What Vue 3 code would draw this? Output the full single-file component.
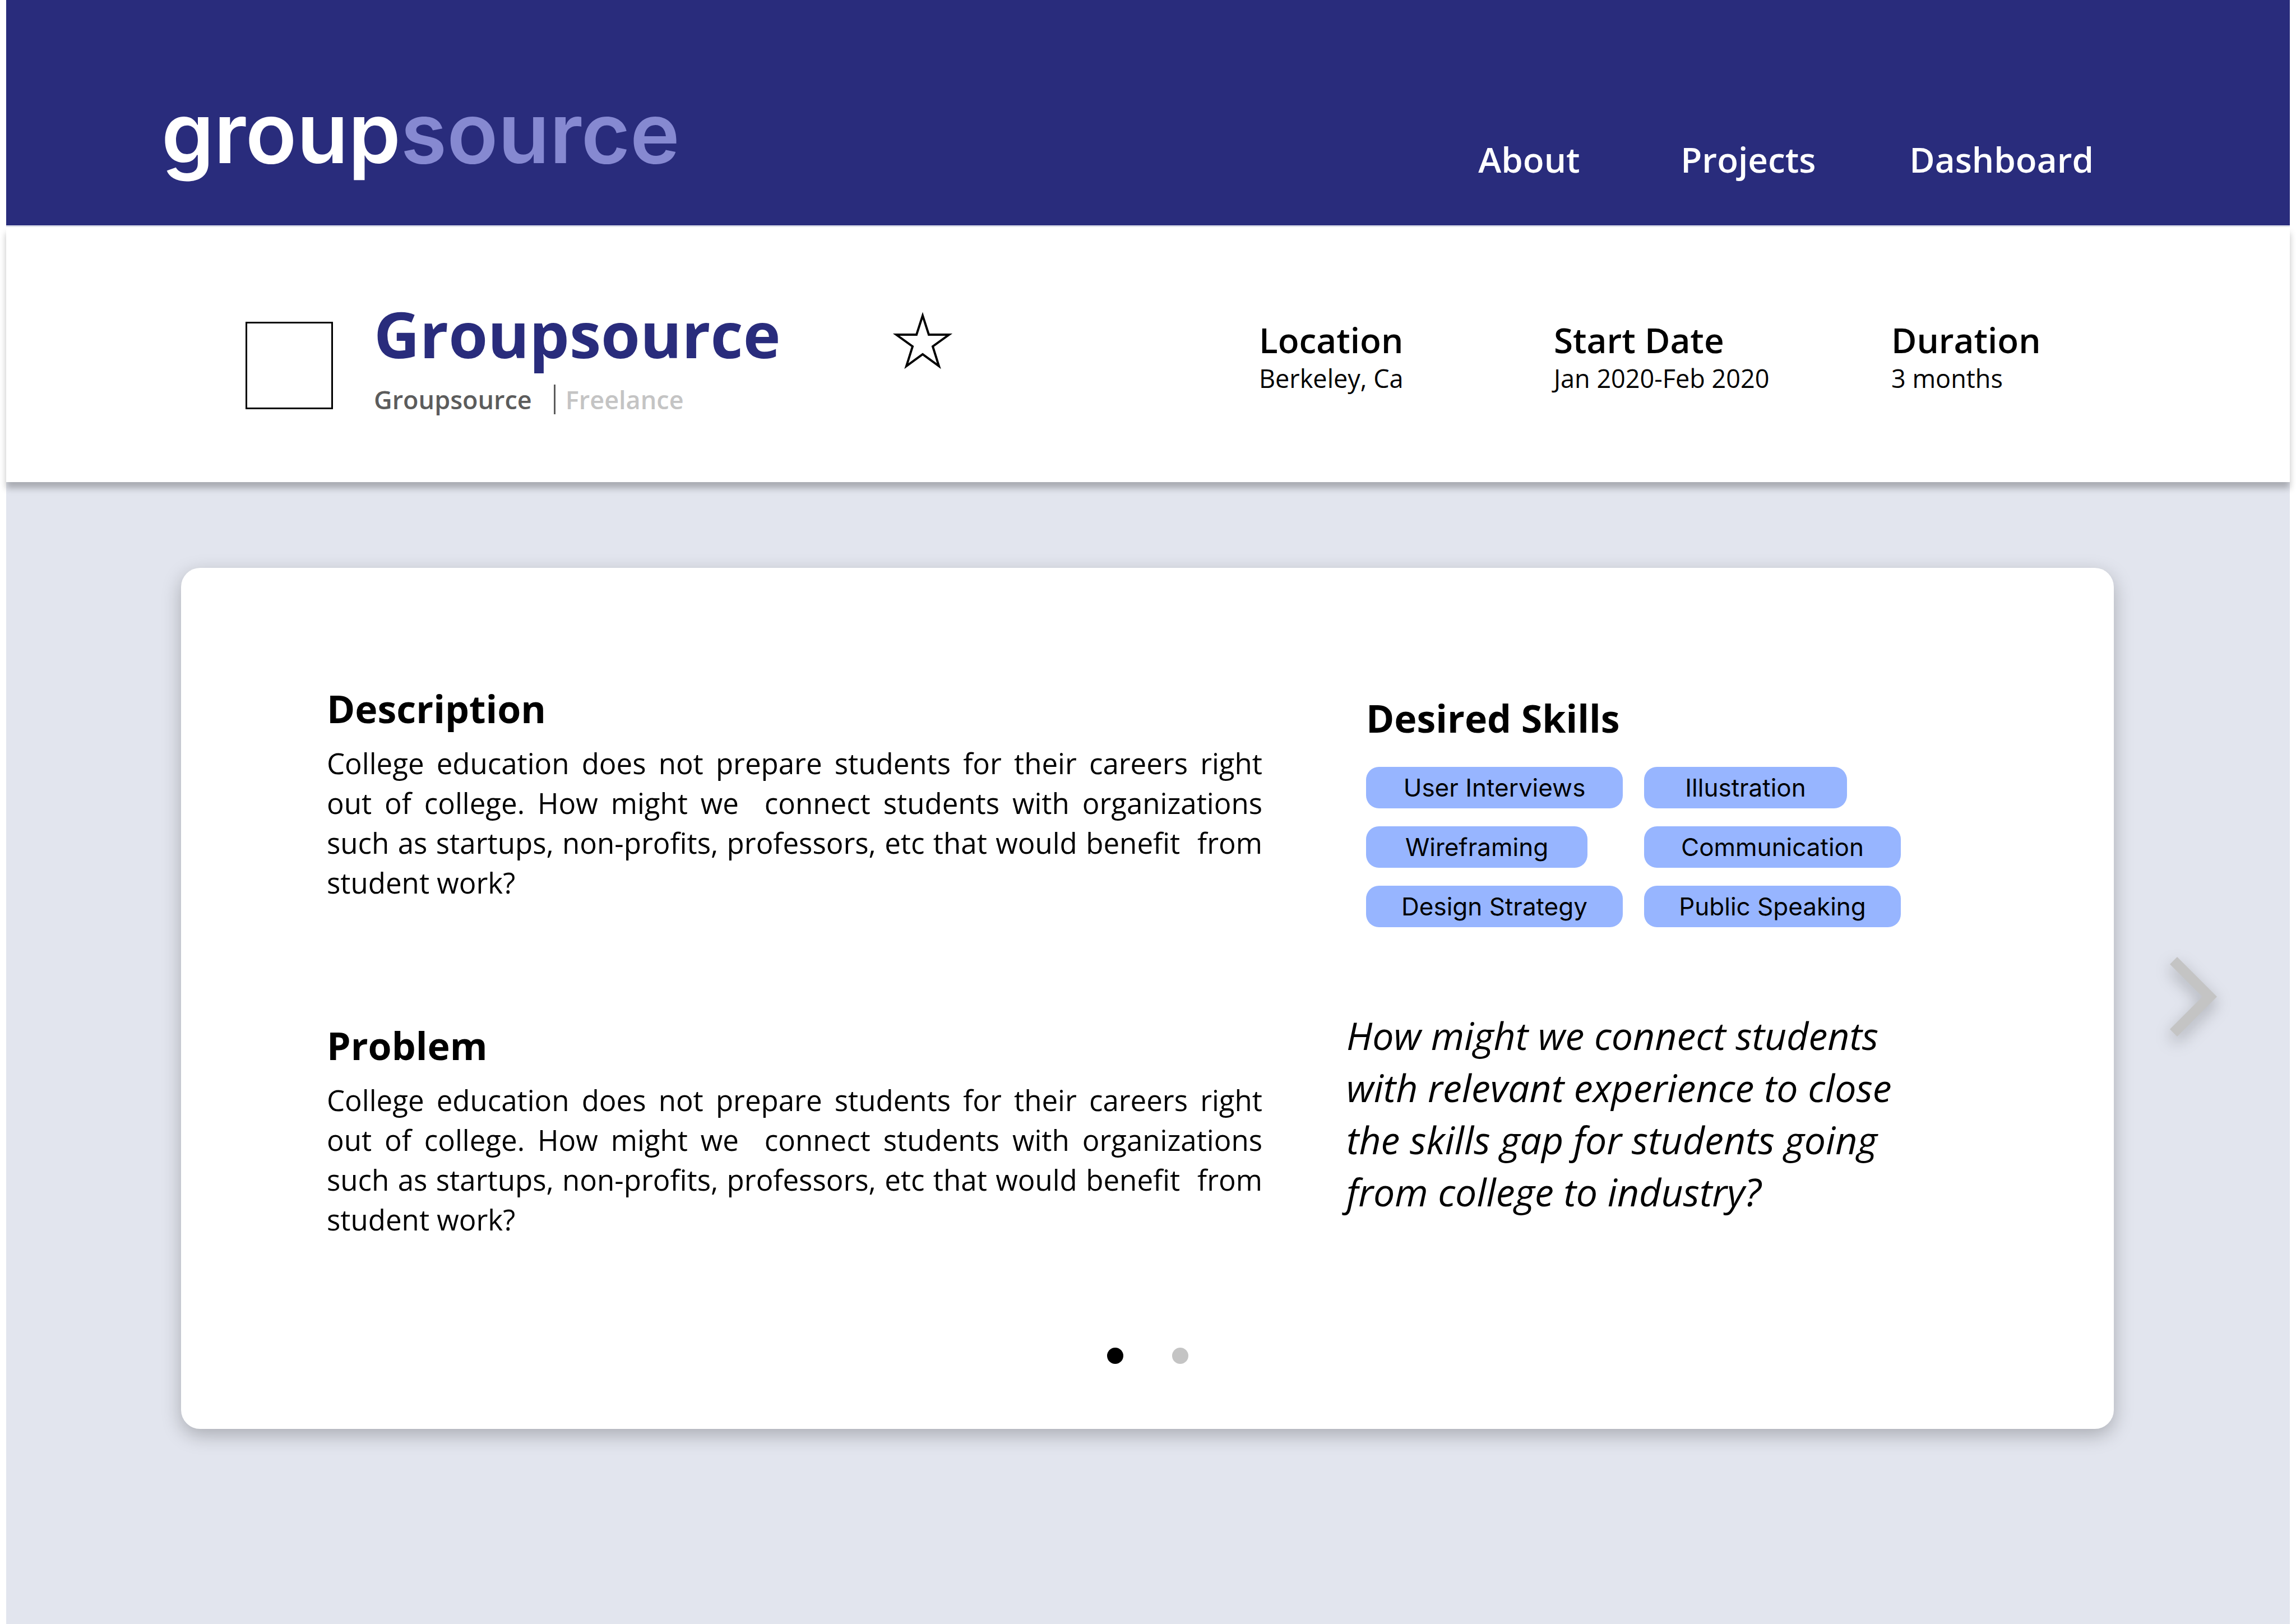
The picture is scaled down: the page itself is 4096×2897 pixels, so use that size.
<script setup>
import { ref } from 'vue'

const navLinks = ['About', 'Projects', 'Dashboard']

const facts = [
  { label: 'Location', value: 'Berkeley, Ca' },
  { label: 'Start Date', value: 'Jan 2020-Feb 2020' },
  { label: 'Duration', value: '3 months' },
]

const summary =
  'College education does not prepare students for their careers right out of college. How might we\u00a0 connect students with organizations such as startups, non-profits, professors, etc that would benefit\u00a0 from student work?'

const sections = [
  { title: 'Description', text: summary },
  { title: 'Problem', text: summary },
]

const skills = [
  { name: 'User Interviews', size: 'large' },
  { name: 'Illustration', size: 'small' },
  { name: 'Wireframing', size: 'medium' },
  { name: 'Communication', size: 'large' },
  { name: 'Design Strategy', size: 'large' },
  { name: 'Public Speaking', size: 'large' },
]

const slides = 2
const current = ref(0)
const starred = ref(false)
</script>

<template>
  <div class="page">
    <header class="topbar">
      <a class="logo" href="#"><span>group</span><span class="logo-tail">source</span></a>
      <nav class="nav">
        <a v-for="link in navLinks" :key="link" href="#">{{ link }}</a>
      </nav>
    </header>

    <section class="project-bar">
      <div class="identity">
        <div class="avatar"></div>
        <div>
          <h1>Groupsource</h1>
          <p class="byline">
            <span class="company">Groupsource</span>
            <span class="kind">Freelance</span>
          </p>
        </div>
        <button
          class="star"
          type="button"
          aria-label="Save project"
          :aria-pressed="starred"
          @click="starred = !starred"
        >
          <svg viewBox="0 0 108 102">
            <path
              d="M54 6 65 40H101L72 61 83 96 54 75 25 96 36 61 7 40H43Z"
              :fill="starred ? '#000' : 'none'"
              stroke="#000"
              stroke-width="4"
            />
          </svg>
        </button>
      </div>
      <dl class="facts">
        <div v-for="fact in facts" :key="fact.label">
          <dt>{{ fact.label }}</dt>
          <dd>{{ fact.value }}</dd>
        </div>
      </dl>
    </section>

    <main class="stage">
      <article class="card">
        <div class="columns">
          <div>
            <section v-for="section in sections" :key="section.title" class="section">
              <h2>{{ section.title }}</h2>
              <p>{{ section.text }}</p>
            </section>
          </div>
          <div class="aside">
            <section class="skills">
              <h2>Desired Skills</h2>
              <ul>
                <li v-for="skill in skills" :key="skill.name" :class="skill.size">{{ skill.name }}</li>
              </ul>
            </section>
            <blockquote>
              How might we connect students with relevant experience to close the skills gap for students
              going from college to industry?
            </blockquote>
          </div>
        </div>
        <div class="dots">
          <button
            v-for="n in slides"
            :key="n"
            type="button"
            :class="{ active: current === n - 1 }"
            :aria-label="`Slide ${n}`"
            @click="current = n - 1"
          ></button>
        </div>
      </article>
      <button class="next" type="button" aria-label="Next" @click="current = (current + 1) % slides">
        <svg viewBox="0 0 84 142">
          <path d="M13 0 84 71 13 142 0 129 58 71 0 13Z" fill="#c4c4c4" />
        </svg>
      </button>
    </main>
  </div>
</template>

<style>
body {
  margin: 0;
  background: #fff;
}
</style>

<style scoped>
.page {
  box-sizing: border-box;
  display: flex;
  flex-direction: column;
  min-height: 100vh;
  padding: 0 11px;
  overflow: hidden;
  font-family: 'Open Sans', 'Noto Sans', sans-serif;
  color: #000;
}

h1,
h2,
p,
dl,
dd,
ul,
blockquote {
  margin: 0;
  padding: 0;
}

a {
  color: inherit;
  text-decoration: none;
}

button {
  padding: 0;
  border: 0;
  background: none;
  cursor: pointer;
}

svg {
  display: block;
  width: 100%;
  overflow: visible;
}

.topbar {
  box-sizing: border-box;
  display: flex;
  justify-content: space-between;
  align-items: flex-end;
  min-height: 402px;
  padding: 0 350px 76px 277px;
  background: #292c7c;
  color: #fff;
}

.logo {
  font-family: Inter, sans-serif;
  font-size: 150px;
  font-weight: 600;
  line-height: 178px;
}

.logo-tail {
  color: #8689d1;
}

.nav {
  display: grid;
  grid-template-columns: 361px 408px auto;
  font-size: 62px;
  font-weight: 600;
  line-height: 84px;
}

.project-bar {
  position: relative;
  box-sizing: border-box;
  display: flex;
  justify-content: space-between;
  min-height: 455px;
  margin-top: 3px;
  padding: 130px 0 0 427px;
  background: #fff;
  box-shadow: 0 11px 11px rgba(0, 0, 0, 0.25), 0 -3px 0 #e2e5ee;
}

.identity {
  display: grid;
  grid-template-columns: 229px 925px 108px;
  align-items: start;
}

.avatar {
  box-sizing: border-box;
  width: 156px;
  height: 156px;
  margin-top: 39px;
  border: 3px solid #000;
}

h1 {
  color: #292c7c;
  font-size: 113px;
  font-weight: 700;
  line-height: 120px;
}

.byline {
  display: flex;
  margin-top: 27px;
  font-size: 45px;
  font-weight: 600;
  line-height: 61px;
}

.company {
  padding-right: 39px;
  color: #5c5c5c;
}

.kind {
  position: relative;
  padding-left: 21px;
  color: #c4c4c4;
}

.kind::before {
  content: '';
  position: absolute;
  top: 4px;
  left: 0;
  width: 3px;
  height: 53px;
  background: #5c5c5c;
}

.star {
  width: 108px;
  margin-top: 22px;
}

.facts {
  display: grid;
  grid-template-columns: 526px 602px 711px;
  padding-top: 33px;
}

dt {
  font-size: 62px;
  font-weight: 600;
  line-height: 76px;
}

dd {
  font-size: 45px;
  line-height: 61px;
}

.stage {
  flex: 1;
  display: grid;
  grid-template-columns: 1fr 314px;
  align-content: start;
  align-items: center;
  padding: 153px 0 0 312px;
  background: #e2e5ee;
}

.card {
  padding-bottom: 116px;
  border-radius: 34px;
  background: #fff;
  box-shadow: 0 11px 34px rgba(0, 0, 0, 0.25);
}

.columns {
  display: grid;
  grid-template-columns: 1669px 1000px;
  column-gap: 150px;
  padding: 204px 0 0 260px;
}

h2 {
  font-size: 68px;
  font-weight: 700;
  line-height: 93px;
}

.section + .section {
  margin-top: 208px;
}

.section p {
  margin-top: 16px;
  font-size: 51px;
  line-height: 71px;
  text-align: justify;
}

.aside {
  padding-top: 17px;
}

.skills {
  padding-left: 35px;
}

.skills ul {
  display: grid;
  grid-template-columns: 496px 458px;
  row-gap: 32px;
  margin-top: 41px;
  list-style: none;
}

.skills li {
  border-radius: 23px;
  background: #97b5ff;
  font-family: Inter, sans-serif;
  font-size: 44px;
  line-height: 74px;
  text-align: center;
}

.large {
  width: 458px;
}

.medium {
  width: 395px;
}

.small {
  width: 362px;
}

blockquote {
  margin-top: 146px;
  font-size: 68px;
  font-style: italic;
  line-height: 93px;
}

.dots {
  display: flex;
  justify-content: center;
  gap: 87px;
  margin-top: 193px;
}

.dots button {
  width: 29px;
  height: 29px;
  border-radius: 50%;
  background: #c4c4c4;
}

.dots .active {
  background: #000;
}

.next {
  width: 84px;
  margin-left: 100px;
  padding-bottom: 6px;
  filter: drop-shadow(0 11px 14px rgba(0, 0, 0, 0.25));
}
</style>
